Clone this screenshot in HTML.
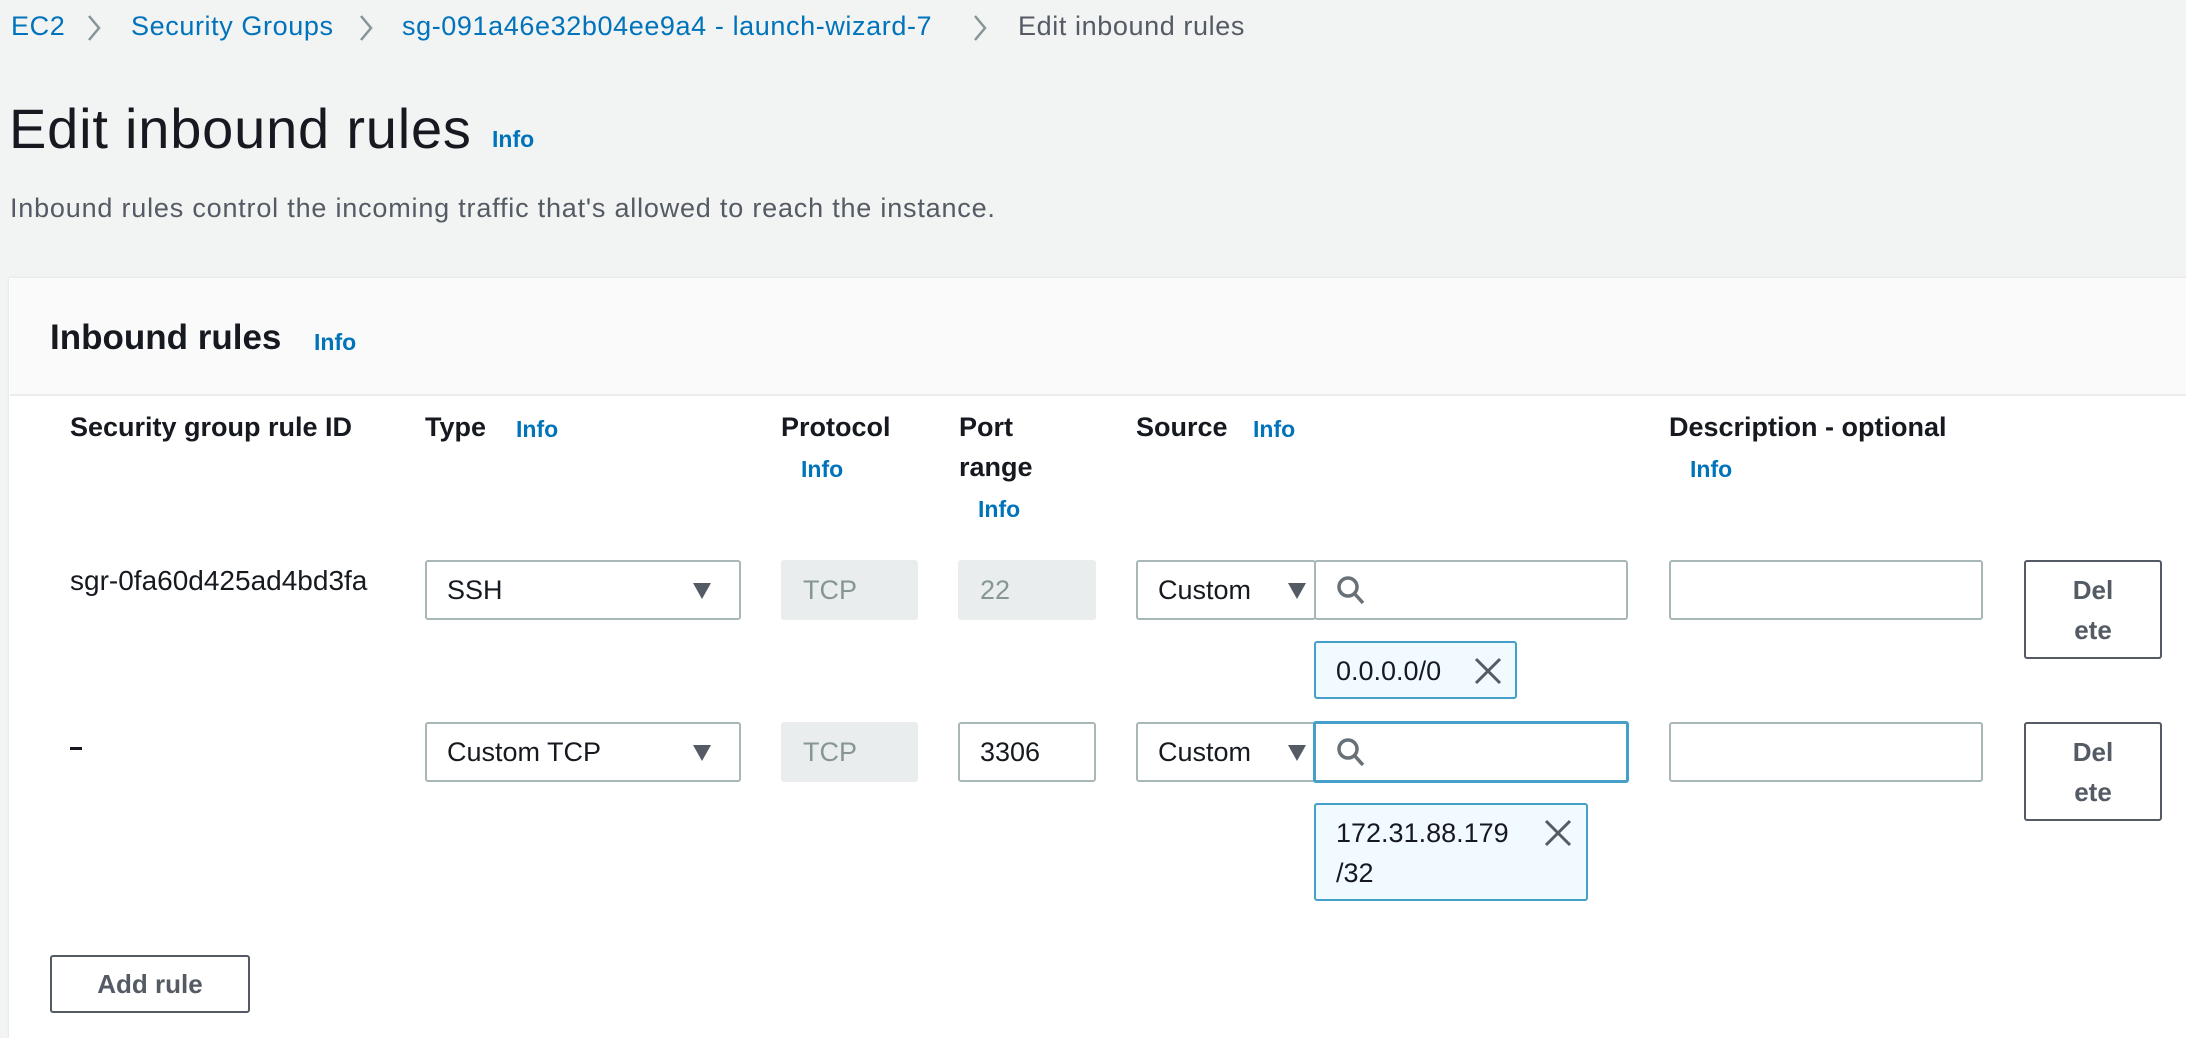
<!DOCTYPE html>
<html><head><meta charset="utf-8"><style>
*{box-sizing:border-box;margin:0;padding:0}
body{width:2186px;height:1028px;background:#f2f3f3;font-family:"Liberation Sans",Arial,sans-serif;color:#16191f;position:relative;overflow:hidden}
.a{position:absolute;white-space:nowrap}
.link{color:#0073bb}
.info{color:#0073bb;font-weight:bold;font-size:23px}
.hd{font-weight:bold;font-size:27px}
.inp{position:absolute;background:#fff;border:2px solid #aab7b8;border-radius:3px;font-size:27px;display:flex;align-items:center;padding-left:20px}
.dis{position:absolute;background:#eaeded;border-radius:3px;color:#879596;font-size:27px;display:flex;align-items:center;padding-left:22px}
.tri{position:absolute;width:0;height:0;border-left:9px solid transparent;border-right:9px solid transparent;border-top:16px solid #545b64}
.btn{position:absolute;background:#fff;border:2px solid #545b64;border-radius:3px;font-weight:bold;color:#545b64;font-size:26px;text-align:center}
.chip{position:absolute;background:#f1faff;border:2px solid #44a0c8;border-radius:3px;font-size:27px}
.bc{font-size:27px;letter-spacing:0.6px;top:11px}
</style></head><body>
<div class="a bc link" style="left:11px">EC2</div>
<svg class="a" style="left:86px;top:14px" width="16" height="28"><path d="M3 2 L13 14 L3 26" stroke="#879596" stroke-width="2.5" fill="none"/></svg>
<div class="a bc link" style="left:131px">Security Groups</div>
<svg class="a" style="left:358px;top:14px" width="16" height="28"><path d="M3 2 L13 14 L3 26" stroke="#879596" stroke-width="2.5" fill="none"/></svg>
<div class="a bc link" style="left:402px">sg-091a46e32b04ee9a4 - launch-wizard-7</div>
<svg class="a" style="left:972px;top:14px" width="16" height="28"><path d="M3 2 L13 14 L3 26" stroke="#879596" stroke-width="2.5" fill="none"/></svg>
<div class="a bc" style="left:1018px;color:#545b64">Edit inbound rules</div>

<div class="a" style="left:9px;top:96px;font-size:56px;letter-spacing:0.8px">Edit inbound rules</div>
<div class="a info" style="left:492px;top:126px">Info</div>
<div class="a" style="left:10px;top:193px;font-size:27px;letter-spacing:0.8px;color:#545b64">Inbound rules control the incoming traffic that's allowed to reach the instance.</div>

<div class="a" style="left:9px;top:278px;width:2200px;height:760px;background:#fff;box-shadow:0 0 2px #d5dbdb"></div>
<div class="a" style="left:10px;top:278px;width:2200px;height:118px;background:#fafafa;border-bottom:2px solid #eaeded"></div>
<div class="a" style="left:50px;top:318px;font-size:35px;font-weight:bold">Inbound rules</div>
<div class="a info" style="left:314px;top:329px">Info</div>

<div class="a hd" style="left:70px;top:412px">Security group rule ID</div>
<div class="a hd" style="left:425px;top:412px">Type</div><div class="a info" style="left:516px;top:416px">Info</div>
<div class="a hd" style="left:781px;top:412px">Protocol</div><div class="a info" style="left:801px;top:456px">Info</div>
<div class="a hd" style="left:959px;top:412px">Port</div>
<div class="a hd" style="left:959px;top:452px">range</div><div class="a info" style="left:978px;top:496px">Info</div>
<div class="a hd" style="left:1136px;top:412px">Source</div><div class="a info" style="left:1253px;top:416px">Info</div>
<div class="a hd" style="left:1669px;top:412px">Description - optional</div><div class="a info" style="left:1690px;top:456px">Info</div>

<!-- row 1 -->
<div class="a" style="left:70px;top:565px;font-size:28px">sgr-0fa60d425ad4bd3fa</div>
<div class="inp" style="left:425px;top:560px;width:316px;height:60px">SSH</div>
<div class="tri" style="left:693px;top:583px"></div>
<div class="dis" style="left:781px;top:560px;width:137px;height:60px">TCP</div>
<div class="dis" style="left:958px;top:560px;width:138px;height:60px">22</div>
<div class="inp" style="left:1136px;top:560px;width:180px;height:60px">Custom</div>
<div class="tri" style="left:1288px;top:583px"></div>
<div class="inp" style="left:1314px;top:560px;width:314px;height:60px"></div>
<svg class="a" style="left:1335px;top:574px" width="32" height="34"><circle cx="13" cy="13" r="9" stroke="#687078" stroke-width="3.5" fill="none"/><path d="M19 19 L28 29" stroke="#687078" stroke-width="3.5"/></svg>
<div class="inp" style="left:1669px;top:560px;width:314px;height:60px"></div>
<div class="btn" style="left:2024px;top:560px;width:138px;height:99px;line-height:40px;padding-top:8px">Del<br>ete</div>
<div class="chip" style="left:1314px;top:641px;width:203px;height:58px"><span class="a" style="left:20px;top:13px">0.0.0.0/0</span>
<svg class="a" style="left:158px;top:14px" width="28" height="28"><path d="M2 2 L26 26 M26 2 L2 26" stroke="#545b64" stroke-width="3"/></svg></div>

<!-- row 2 -->
<div class="a" style="left:70px;top:747px;width:12px;height:3px;background:#16191f"></div>
<div class="inp" style="left:425px;top:722px;width:316px;height:60px">Custom TCP</div>
<div class="tri" style="left:693px;top:745px"></div>
<div class="dis" style="left:781px;top:722px;width:137px;height:60px">TCP</div>
<div class="inp" style="left:958px;top:722px;width:138px;height:60px">3306</div>
<div class="inp" style="left:1136px;top:722px;width:180px;height:60px">Custom</div>
<div class="tri" style="left:1288px;top:745px"></div>
<div class="inp" style="left:1313px;top:721px;width:316px;height:62px;border:3px solid #44a0c8"></div>
<svg class="a" style="left:1335px;top:736px" width="32" height="34"><circle cx="13" cy="13" r="9" stroke="#687078" stroke-width="3.5" fill="none"/><path d="M19 19 L28 29" stroke="#687078" stroke-width="3.5"/></svg>
<div class="inp" style="left:1669px;top:722px;width:314px;height:60px"></div>
<div class="btn" style="left:2024px;top:722px;width:138px;height:99px;line-height:40px;padding-top:8px">Del<br>ete</div>
<div class="chip" style="left:1314px;top:803px;width:274px;height:98px"><span class="a" style="left:20px;top:13px">172.31.88.179</span><span class="a" style="left:20px;top:53px">/32</span>
<svg class="a" style="left:228px;top:14px" width="28" height="28"><path d="M2 2 L26 26 M26 2 L2 26" stroke="#545b64" stroke-width="3"/></svg></div>

<div class="btn" style="left:50px;top:955px;width:200px;height:58px;line-height:54px">Add rule</div>
</body></html>
